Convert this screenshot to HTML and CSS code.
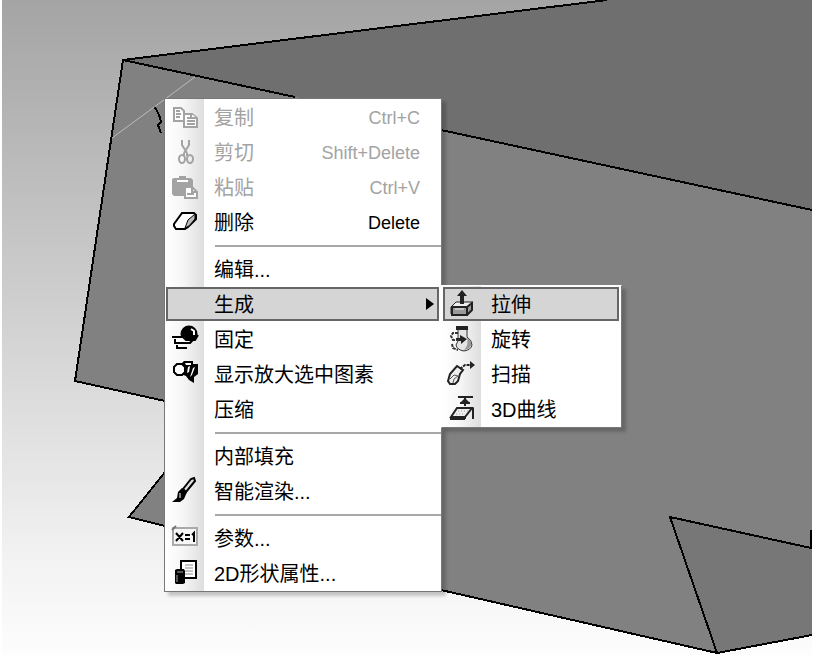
FILE: index.html
```html
<!DOCTYPE html>
<html lang="zh-CN">
<head>
<meta charset="utf-8">
<meta name="viewport" content="width=device-width, initial-scale=1">
<title>2D形状</title>
<link rel="stylesheet" href="styles.css">
</head>
<body>
<main class="viewport">
  <svg class="scene" viewBox="2 0 810 655" preserveAspectRatio="xMinYMin slice" aria-hidden="true">
    <path fill="#818181" d="M123 60 295 97 812 210V635L717 653 441 590 129 517 165 472V401L75 381Z"/>
    <path fill="#6f6f6f" d="M123 60 607 0H812V210L441 130 295 97Z"/>
    <path fill="#777" d="M670 517 812 548V635L717 653Z"/>
    <path class="edge" d="M607 0 123 60 75 381 165 401M123 60 295 97M441 130 812 210M165 472 129 517 165 526M441 590 717 653 812 635M717 653 670 517 811 548V530"/>
    <path class="edge" d="M154 107C158 111 160 117 161 122L158 125 161 133"/>
    <path class="sketch-line" d="M112 138 195 77"/>
  </svg>

  <ul class="menu menu-main">
    <li><button class="item" disabled>
      <svg class="icon" viewBox="0 0 26 24"><g fill="#fff" stroke="#a3a3a3" stroke-width="2"><path d="M2 3H9L12 6V16H2Z"/><path d="M4 6H8M4 9H9M4 12H8"/><path d="M12 9H20L25 13V22H12Z"/><path d="M19 9V13H25M15 13H18M15 16H23M15 19H23"/></g></svg>
      <span class="label">复制</span><kbd class="keys">Ctrl+C</kbd></button></li>
    <li><button class="item" disabled>
      <svg class="icon" viewBox="0 0 26 24"><g fill="none" stroke="#a3a3a3" stroke-width="2"><path d="M10 0V5L15 13M17 0V5L12 13"/><path d="M12 13V16M15 13V16"/><ellipse cx="10" cy="19" rx="3" ry="4"/><ellipse cx="18" cy="19" rx="3" ry="4"/></g></svg>
      <span class="label">剪切</span><kbd class="keys">Shift+Delete</kbd></button></li>
    <li><button class="item" disabled>
      <svg class="icon" viewBox="0 0 26 24"><path fill="#a3a3a3" d="M0 4 2 3H7V1H14V3H19L21 5V21H2L0 19Z"/><path stroke="#fff" stroke-width="2" d="M5 6H16"/><path fill="#fff" stroke="#a3a3a3" stroke-width="2" d="M13 12H20L25 17V23H13Z"/><path fill="none" stroke="#a3a3a3" stroke-width="2" d="M20 12V17H25M15 19H22"/></svg>
      <span class="label">粘贴</span><kbd class="keys">Ctrl+V</kbd></button></li>
    <li><button class="item">
      <svg class="icon" viewBox="0 0 26 24"><path fill="#fff" stroke="#000" stroke-width="2" d="M10 3H22L24 5V9L16 17 13 19H4L2 16V14Z"/><path fill="#bbb" stroke="#000" d="M23 4 16 10 13 18 17 16 23 9Z"/></svg>
      <span class="label">删除</span><kbd class="keys">Delete</kbd></button></li>
    <li class="separator" role="separator"></li>
    <li><button class="item"><span class="icon"></span><span class="label">编辑...</span></button></li>
    <li class="has-submenu"><button class="item is-open" aria-haspopup="true" aria-expanded="true">
      <span class="icon"></span><span class="label">生成</span>
      <svg class="arrow" viewBox="0 0 8 12"><path d="M0 0 8 6 0 12Z"/></svg></button>
      <ul class="menu submenu">
        <li><button class="item is-open">
          <svg class="icon" viewBox="0 0 26 24"><path fill="#eee" stroke="#222" d="M2 15 7 10H23V17L18 22H2Z"/><path fill="#999" stroke="#222" stroke-width="2" d="M3 15H18V23H3ZM18 15 23 11V18L18 23"/><path stroke="#eee" d="M6 17H15"/><path fill="#222" d="M13 -2 8 4H11V12H15V4H18Z"/></svg>
          <span class="label">拉伸</span></button></li>
        <li><button class="item">
          <svg class="icon" viewBox="0 0 26 24"><path fill="#e4e4e4" stroke="#333" d="M9 2H18V10Q23 13 23 18 22 23 15 24 8 23 7 18L9 14Z"/><path fill="#999" d="M18 11Q23 14 22 18 21 22 15 23 20 18 18 11Z"/><path fill="#222" d="M7 -1H19V3H7ZM11 8 18 12 12 17V14H7V11H11Z"/><path fill="none" stroke="#333" stroke-width="2" stroke-dasharray="3 1" d="M9 6H4L2 9 4 13H10M3 17 4 21 9 23"/></svg>
          <span class="label">旋转</span></button></li>
        <li><button class="item">
          <svg class="icon" viewBox="0 0 26 24"><path fill="#eee" stroke="#222" stroke-width="2" d="M8 4 14 8 11 12 9 19 6 22H1L-1 19 1 12Z"/><path fill="none" stroke="#555" d="M1 17 5 13 9 14M4 21 5 17 9 14"/><path fill="none" stroke="#222" stroke-width="2" stroke-dasharray="3 1" d="M11 7 16 3H21"/><path fill="#222" d="M21 -1 26 3 21 7Z"/></svg>
          <span class="label">扫描</span></button></li>
        <li><button class="item">
          <svg class="icon" viewBox="0 0 26 24"><path stroke="#222" stroke-width="2" d="M9 0H24M16 1V9M11 6H21"/><path fill="#222" d="M16 1 20 5H12Z"/><path fill="#eee" stroke="#222" stroke-width="2" d="M8 11H23L16 20H2Z"/><path fill="none" stroke="#222" stroke-width="2" d="M24 11V22M16 20V22M2 20V22H16"/><path stroke="#999" stroke-dasharray="1 2" d="M9 14H19M7 17H16"/></svg>
          <span class="label">3D曲线</span></button></li>
      </ul>
    </li>
    <li><button class="item">
      <svg class="icon" viewBox="0 0 26 24"><circle cx="17" cy="7" r="8.5"/><path fill="none" stroke="#fff" stroke-width="2" d="M19 2 22 4V8"/><path fill="#fff" d="M1 10H12L14 13H20L16 16H4Z"/><path fill="none" stroke="#000" stroke-width="2" d="M0 10H11L14 13H23L26 8M3 12V16H18L20 14M5 18V21H15"/></svg>
      <span class="label">固定</span></button></li>
    <li><button class="item">
      <svg class="icon" viewBox="0 0 26 24"><path d="M9 2 12 -1H21V2H26V12L22 15V21L17 18 14 14 9 12Z"/><path fill="#fff" d="M13 1H19V3H14ZM16 5 18 4 17 10 15 11ZM21 6 23 5 20 13 18 15Z"/><path fill="#fff" stroke="#000" stroke-width="2" d="M5 2H10L13 5V10L10 13H5L2 10V5Z"/></svg>
      <span class="label">显示放大选中图素</span></button></li>
    <li><button class="item"><span class="icon"></span><span class="label">压缩</span></button></li>
    <li class="separator" role="separator"></li>
    <li><button class="item"><span class="icon"></span><span class="label">内部填充</span></button></li>
    <li><button class="item">
      <svg class="icon" viewBox="0 0 26 24"><path fill="#ddd" stroke="#000" stroke-width="2" d="M11 10 19 0 22 -1 23 2 14 13Z"/><path d="M10 9 15 13 12 20 8 23H0L5 19 6 13Z"/><path fill="none" stroke="#fff" d="M8 14V19"/></svg>
      <span class="label">智能渲染...</span></button></li>
    <li class="separator" role="separator"></li>
    <li><button class="item">
      <svg class="icon" viewBox="0 0 26 24"><path fill="#f6f6f6" stroke="#aaa" stroke-width="2" d="M1 2H25V19H1Z"/><path fill="none" stroke="#777" stroke-width="2" d="M0 4 4 0"/><path fill="none" stroke="#000" stroke-width="2" d="M4 7 11 15M11 7 4 15M13 9H18M13 13H18M20 9 22 7V16"/></svg>
      <span class="label">参数...</span></button></li>
    <li><button class="item">
      <svg class="icon" viewBox="0 0 26 24"><path fill="#fff" stroke="#000" stroke-width="2" d="M9 0H24V17H9Z"/><path stroke="#888" d="M13 4H21M13 7H21M13 10H21M13 13H21"/><path d="M3 9 5 8H12L13 10V22L11 23H4L3 22Z"/><path stroke="#aaa" d="M5 11H11M5 14V21"/></svg>
      <span class="label">2D形状属性...</span></button></li>
  </ul>
</main>
</body>
</html>
```
FILE: styles.css
```css
* {
  box-sizing: border-box;
}

body {
  margin: 0;
  background: #fff;
  color: #000;
  font-family: "Liberation Sans", "Noto Sans CJK SC", sans-serif;
  font-size: 20px;
}

.viewport {
  position: relative;
  min-height: 100vh;
  margin: 0 9px 0 2px;
  overflow: hidden;
  background: linear-gradient(#a4a4a4, #d4d4d4 52%, #f2f2f2 85%, #fdfdfd);
}

.scene {
  position: absolute;
  inset: 0;
  width: 100%;
  height: 100%;
}

.edge {
  fill: none;
  stroke: #000;
  stroke-width: 2;
  shape-rendering: crispEdges;
}

.sketch-line {
  stroke: #bcbcbc;
  stroke-width: 1;
}

.menu {
  margin: 0;
  padding: 0;
  list-style: none;
  border: 1px solid #777;
  background: linear-gradient(90deg, #fff, #f6f6f6 18px, #dedede 39px, #fff 39px);
  box-shadow: 4px 4px 3px rgb(0 0 0 / 20%);
}

.menu-main {
  position: absolute;
  top: 98px;
  left: 162px;
  min-width: 278px;
  padding-top: 1px;
}

.item {
  display: flex;
  align-items: center;
  width: calc(100% - 3px);
  height: 34px;
  margin: 0 2px 1px 1px;
  padding: 0 17px 0 4px;
  border: 2px solid transparent;
  background: none;
  color: inherit;
  font: inherit;
  line-height: 28px;
  text-align: left;
  white-space: nowrap;
}

.item:disabled {
  color: #a3a3a3;
}

.item.is-open {
  border-color: #666;
  background: #d5d5d5;
}

.icon {
  flex: none;
  width: 26px;
  height: 24px;
  margin-right: 16px;
  overflow: visible;
}

.label {
  flex: 1;
  padding-top: 2px;
}

.keys {
  padding-top: 2px;
  font-family: inherit;
  font-size: 18px;
}

.separator {
  height: 12px;
  margin-left: 50px;
  padding-top: 5px;
}

.separator::before {
  content: "";
  display: block;
  height: 2px;
  background: #a8a8a8;
}

.has-submenu {
  position: relative;
}

.has-submenu > .item {
  padding-right: 3px;
}

.arrow {
  width: 8px;
  height: 12px;
}

.submenu {
  position: absolute;
  z-index: 1;
  top: -2px;
  left: 100%;
  min-width: 181px;
  padding-top: 1px;
  border-color: #fff #777 #777 #fff;
}
```
